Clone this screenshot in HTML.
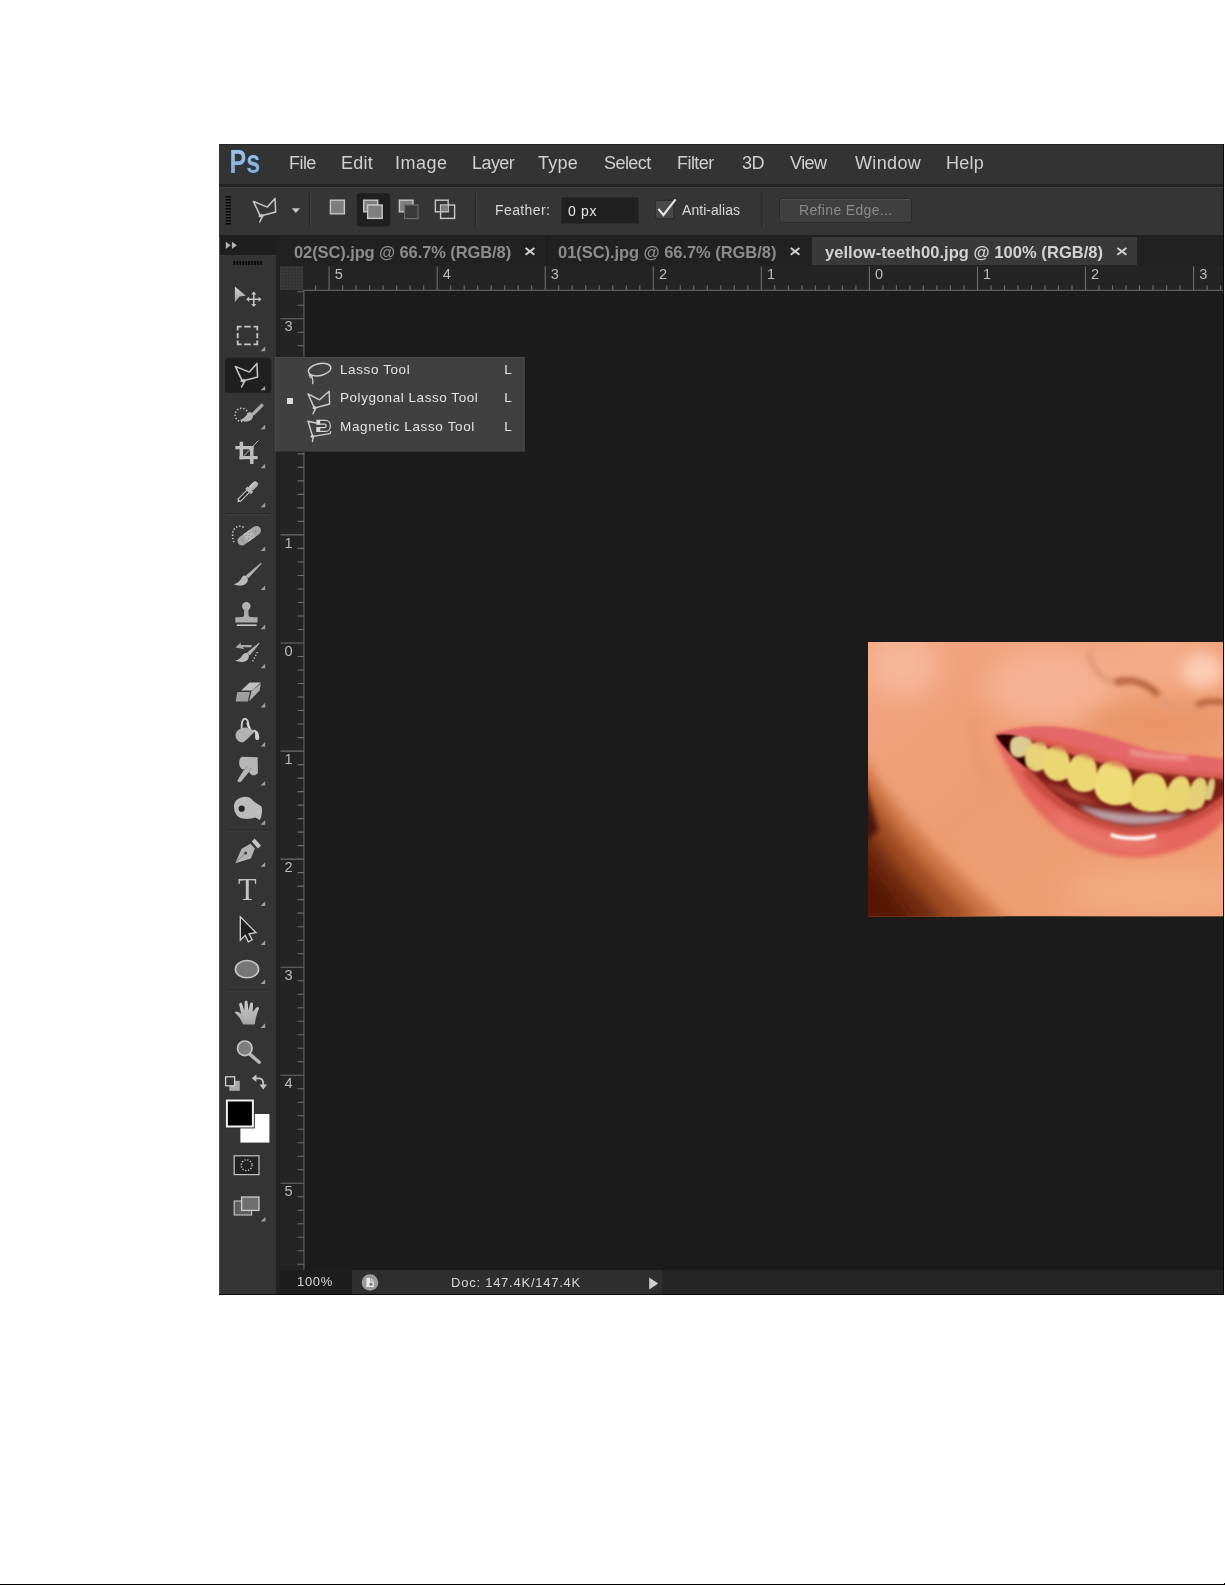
<!DOCTYPE html>
<html>
<head>
<meta charset="utf-8">
<title>Polygonal Lasso Tool</title>
<style>
*{margin:0;padding:0;box-sizing:border-box;}
html,body{width:1225px;height:1585px;background:#fff;overflow:hidden;}
body{position:relative;font-family:"Liberation Sans",sans-serif;color:#d6d6d6;}
.abs{position:absolute;}
#app{position:absolute;left:219px;top:144px;width:1005px;height:1151px;background:#1b1b1b;overflow:hidden;}
#blur{position:absolute;left:0;top:0;width:1005px;height:1151px;}
#app span{filter:blur(0.3px);}
#overlay,#rul{filter:blur(0.3px);}
#menubar{left:0;top:0;width:1005px;height:40px;background:#333;}
#menubar span{position:absolute;top:9px;font-size:18px;line-height:20px;color:#d0d0d0;letter-spacing:-0.55px;white-space:nowrap;}
#menuline{left:0;top:40px;width:1005px;height:3px;background:#232323;}
#optbar{left:0;top:43px;width:1005px;height:48.4px;background:#353535;border-top:1px solid #424242;}
#optline{left:0;top:91.4px;width:1005px;height:1.8px;background:#202020;}
.lbl{position:absolute;font-size:14px;line-height:16px;color:#d8d8d8;white-space:nowrap;letter-spacing:-0.3px;}
#tabbar{left:56px;top:93px;width:949px;height:29px;background:#212121;}
.tab{position:absolute;top:0;height:28px;font-size:16.5px;line-height:31px;font-weight:bold;color:#8c8c8c;white-space:nowrap;}
.tab.act{background:#393939;color:#d2d2d2;}
.tx{position:absolute;top:0;font-size:14px;font-weight:bold;line-height:28px;color:#c4c4c4;}
#toolbar{left:0;top:93px;width:57px;height:1058px;background:#343434;}
#tbhead{left:0;top:0;width:57px;height:18px;background:#1f1f1f;}
#gap{left:57px;top:93px;width:4px;height:1058px;background:#212121;}
#canvas{left:85px;top:147px;width:920px;height:980px;background:#1b1b1b;}
#status{left:61px;top:1126px;width:944px;height:25px;background:#252525;}
#overlay{position:absolute;left:0;top:0;}
#flyout{left:56px;top:213px;width:250px;height:95px;background:#404040;border-top:1px solid #4a4a4a;border-left:1px solid #484848;border-bottom:1px solid #333;}
.fl{position:absolute;font-size:13.5px;line-height:14px;color:#e2e2e2;white-space:nowrap;}
.st{position:absolute;font-size:13px;line-height:14px;color:#d8d8d8;white-space:nowrap;}
#bottomline{left:0;top:1584px;width:1225px;height:1px;background:#000;}
#dot{left:1224px;top:1583px;width:1px;height:2px;background:#000;}
#edgeR{left:1004px;top:0;width:1px;height:1151px;background:#0a0a0a;}
#edgeT{left:0;top:0;width:1005px;height:1px;background:#262626;}
#edgeB{left:0;top:1150px;width:1005px;height:1px;background:#0a0a0a;}
</style>
</head>
<body>
<div id="app"><div id="blur">
  <div id="menubar" class="abs">
    <span id="m1" style="left:70px">File</span>
    <span id="m2" style="left:122px;letter-spacing:0.25px">Edit</span>
    <span id="m3" style="left:176px;letter-spacing:0.50px">Image</span>
    <span id="m4" style="left:253px">Layer</span>
    <span id="m5" style="left:319px;letter-spacing:0.25px">Type</span>
    <span id="m6" style="left:385px">Select</span>
    <span id="m7" style="left:458px">Filter</span>
    <span id="m8" style="left:523px">3D</span>
    <span id="m9" style="left:571px">View</span>
    <span id="m10" style="left:636px;letter-spacing:0.35px">Window</span>
    <span id="m11" style="left:727px;letter-spacing:0.25px">Help</span>
  </div>
  <div id="menuline" class="abs"></div>
  <div id="optbar" class="abs">
    <span id="o1" class="lbl" style="left:276px;top:14px;letter-spacing:0.4px">Feather:</span>
    <div class="abs" style="left:342px;top:9px;width:78px;height:27px;background:#202020;border:1px solid #2a2a2a;"></div>
    <span id="o2" class="lbl" style="left:349px;top:15px;color:#e4e4e4;letter-spacing:0.7px">0 px</span>
    <span id="o3" class="lbl" style="left:463px;top:14px;letter-spacing:0.05px">Anti-alias</span>
    <div class="abs" style="left:560px;top:9.5px;width:132.5px;height:25.5px;background:#3f3f3f;border:1px solid #2b2b2b;border-radius:3px;box-shadow:inset 0 1px 0 #4e4e4e;"></div>
    <span id="o4" class="lbl" style="left:580px;top:14px;color:#8a8a8a;letter-spacing:0.34px">Refine Edge...</span>
  </div>
  <div id="optline" class="abs"></div>
  <div id="tabbar" class="abs">
    <div class="tab" style="left:0;width:272px;"><span id="t1" class="abs" style="left:19px;letter-spacing:-0.1px">02(SC).jpg @ 66.7% (RGB/8)</span></div>
    <div class="tab" style="left:272px;width:265px;border-left:1px solid #1a1a1a"><span id="t2" class="abs" style="left:10px;letter-spacing:-0.05px">01(SC).jpg @ 66.7% (RGB/8)</span></div>
    <div class="tab act" style="left:537px;width:325px;"><span id="t3" class="abs" style="left:13px;letter-spacing:0.05px">yellow-teeth00.jpg @ 100% (RGB/8)</span></div>
  </div>
  <div id="canvas" class="abs"></div>
<svg class="abs" style="left:649px;top:498.3px" width="356" height="274.4" viewBox="0 0 1225 946" preserveAspectRatio="none">
<defs>
<filter id="b4" filterUnits="userSpaceOnUse" x="-300" y="-300" width="1900" height="1600"><feGaussianBlur stdDeviation="4"/></filter>
<filter id="b8" filterUnits="userSpaceOnUse" x="-300" y="-300" width="1900" height="1600"><feGaussianBlur stdDeviation="9"/></filter>
<filter id="b20" filterUnits="userSpaceOnUse" x="-300" y="-300" width="1900" height="1600"><feGaussianBlur stdDeviation="22"/></filter>
<filter id="b40" filterUnits="userSpaceOnUse" x="-300" y="-300" width="1900" height="1600"><feGaussianBlur stdDeviation="45"/></filter>
<linearGradient id="skin" x1="0" y1="0" x2="1" y2="1"><stop offset="0" stop-color="#f2a683"/><stop offset=".45" stop-color="#ee9c72"/><stop offset="1" stop-color="#f0a073"/></linearGradient>
<clipPath id="pc"><rect x="0" y="0" width="1225" height="946"/></clipPath>
</defs>
<g clip-path="url(#pc)">
<rect x="0" y="0" width="1225" height="946" fill="url(#skin)"/>
<!-- light cheek / nose areas -->
<ellipse cx="640" cy="150" rx="240" ry="140" fill="#f5b292" filter="url(#b40)"/>
<ellipse cx="1010" cy="70" rx="230" ry="110" fill="#f4ac88" filter="url(#b40)"/>
<ellipse cx="1150" cy="100" rx="70" ry="60" fill="#fcccb4" filter="url(#b20)"/>
<ellipse cx="1000" cy="290" rx="260" ry="70" fill="#ea9468" filter="url(#b40)"/>
<ellipse cx="120" cy="80" rx="120" ry="110" fill="#f6b899" filter="url(#b40)"/>
<ellipse cx="1000" cy="860" rx="330" ry="90" fill="#f3aa80" filter="url(#b40)"/>
<!-- neck / jaw shadow -->
<path d="M-80,300 C0,430 70,540 170,650 C260,750 360,850 490,965 L-80,965Z" fill="#cc7444" filter="url(#b20)"/>
<path d="M-80,400 C0,515 60,615 145,715 C225,808 305,890 390,965 L-80,965Z" fill="#a04c22" filter="url(#b20)"/>
<path d="M-80,520 C-10,625 50,722 120,802 C180,872 232,922 275,975 L-80,975Z" fill="#6e2c10" filter="url(#b20)"/>
<path d="M-80,640 C-20,730 30,810 90,880 L160,975 L-80,975Z" fill="#561806" filter="url(#b20)"/>
<path d="M-50,385 C-15,460 8,560 36,650 L-50,720Z" fill="#4a1408" filter="url(#b8)"/>
<!-- smile fold -->
<path d="M372,250 C350,330 370,420 430,500" fill="none" stroke="#e6966a" stroke-width="18" filter="url(#b20)"/>
<!-- nose shadows -->
<path d="M760,30 C770,110 830,150 890,140" fill="none" stroke="#e09a78" stroke-width="18" filter="url(#b8)"/>
<path d="M850,140 C900,122 960,138 1000,185" fill="none" stroke="#b4623e" stroke-width="22" filter="url(#b8)"/>
<path d="M1000,190 C1040,240 1100,240 1140,215" fill="none" stroke="#e29a78" stroke-width="16" filter="url(#b8)"/>
<path d="M1130,218 C1165,200 1200,202 1260,212" fill="none" stroke="#b4623e" stroke-width="20" filter="url(#b8)"/>
<!-- mouth: outer lips -->
<path d="M432,322 C520,290 600,285 700,300 C800,315 880,350 960,372 C1050,392 1140,388 1240,408 L1240,600 C1180,680 1080,730 950,742 C820,750 700,700 600,600 C540,540 480,440 432,322Z" fill="#e5665c" filter="url(#b8)"/>
<!-- mouth interior -->
<path d="M445,325 C520,318 600,345 700,385 C800,420 950,450 1225,470 L1225,530 C1150,600 1050,640 900,640 C780,630 680,570 600,490 C540,430 490,380 445,325Z" fill="#7a1e14" filter="url(#b4)"/>
<path d="M440,322 C470,312 500,318 520,330 L560,440 C520,420 470,370 440,322Z" fill="#2e0603" filter="url(#b4)"/>
<!-- tongue / lower teeth -->
<path d="M720,560 C810,585 950,605 1100,590 C1070,622 980,636 885,630 C810,624 760,600 720,560Z" fill="#b9a0a6" filter="url(#b8)"/>
<path d="M600,480 C660,500 740,520 800,560 C740,560 660,540 600,480Z" fill="#a84030" filter="url(#b8)"/>
<!-- teeth -->
<g filter="url(#b4)">
<path d="M490,345 C495,318 540,318 565,340 C565,380 540,402 510,398 C490,392 485,370 490,345Z" fill="#dccb92"/>
<path d="M540,400 C540,360 570,335 605,345 C625,360 625,400 600,440 C575,455 540,445 540,400Z" fill="#e6d37a"/>
<path d="M600,430 C600,385 620,352 660,358 C695,370 700,420 690,465 C665,490 615,485 600,430Z" fill="#e9d672"/>
<path d="M685,470 C685,420 705,378 750,385 C790,395 795,450 780,505 C750,528 695,520 685,470Z" fill="#ebd873"/>
<path d="M780,510 C780,450 800,405 850,410 C905,420 920,480 905,550 C870,575 790,565 780,510Z" fill="#eedc78"/>
<path d="M900,545 C905,490 930,448 980,450 C1030,455 1040,520 1025,575 C990,595 910,590 900,545Z" fill="#ead66e"/>
<path d="M1020,570 C1020,520 1040,462 1080,460 C1115,465 1115,530 1100,575 C1075,595 1030,592 1020,570Z" fill="#e8d470"/>
<path d="M1095,565 C1100,520 1115,468 1145,465 C1175,470 1170,530 1150,570 C1130,585 1100,582 1095,565Z" fill="#e4d076"/>
<path d="M1160,545 C1165,510 1170,470 1185,466 C1200,470 1195,510 1180,545Z" fill="#dcc880"/>
</g>
<!-- upper lip over teeth top -->
<path d="M440,318 C520,292 600,288 700,302 C800,318 880,352 960,374 C1050,394 1140,390 1240,410 L1240,470 C1140,450 1020,448 940,430 C860,400 780,370 700,350 C620,330 540,310 440,318Z" fill="#e4686a" filter="url(#b4)"/>
<path d="M560,335 C700,370 860,425 960,440 C1060,455 1140,455 1230,465" fill="none" stroke="#cf5548" stroke-width="14" filter="url(#b8)"/>
<path d="M900,378 C960,392 1040,400 1100,398" fill="none" stroke="#f2a79a" stroke-width="14" filter="url(#b8)"/>
<!-- lower lip inner shade -->
<path d="M540,440 C620,540 720,620 900,650 C1040,650 1140,610 1225,540" fill="none" stroke="#c4483c" stroke-width="26" filter="url(#b8)"/>
<!-- lower lip highlight -->
<path d="M640,600 C740,680 860,710 1000,690" fill="none" stroke="#ee8476" stroke-width="30" filter="url(#b20)"/>
<path d="M835,665 C880,680 940,682 990,668" fill="none" stroke="#fff4f0" stroke-width="13" filter="url(#b4)"/>
</g>
</svg>
<svg id="rul" class="abs" style="left:0;top:0" width="1005" height="1151" viewBox="219 144 1005 1151">
<rect x="280" y="266" width="945" height="25" fill="#242424"/>
<rect x="280" y="291" width="24.5" height="980" fill="#242424"/>
<rect x="280" y="266.5" width="23" height="23.5" fill="#3c3c3c"/>
<path d="M280,269.5H303 M280,272.5H303 M280,275.5H303 M280,278.5H303 M280,281.5H303 M280,284.5H303 M280,287.5H303 M283,266.5V290 M286,266.5V290 M289,266.5V290 M292,266.5V290 M295,266.5V290 M298,266.5V290 M301,266.5V290" stroke="#323232" stroke-width="1.2"/>
<path d="M303,290.3 H1225" stroke="#5c5c5c" stroke-width="1.2"/>
<path d="M303.9,290 V1271" stroke="#5c5c5c" stroke-width="1.2"/>
<path d="M315.6,285.2V290 M342.6,285.2V290 M356.1,285.2V290 M369.6,285.2V290 M383.1,285.2V290 M396.6,285.2V290 M410.1,285.2V290 M423.7,285.2V290 M450.7,285.2V290 M464.2,285.2V290 M477.7,285.2V290 M491.2,285.2V290 M504.7,285.2V290 M518.2,285.2V290 M531.7,285.2V290 M558.7,285.2V290 M572.2,285.2V290 M585.7,285.2V290 M599.2,285.2V290 M612.8,285.2V290 M626.3,285.2V290 M639.8,285.2V290 M666.8,285.2V290 M680.3,285.2V290 M693.8,285.2V290 M707.3,285.2V290 M720.8,285.2V290 M734.3,285.2V290 M747.8,285.2V290 M774.8,285.2V290 M788.4,285.2V290 M801.9,285.2V290 M815.4,285.2V290 M828.9,285.2V290 M842.4,285.2V290 M855.9,285.2V290 M882.9,285.2V290 M896.4,285.2V290 M909.9,285.2V290 M923.4,285.2V290 M936.9,285.2V290 M950.4,285.2V290 M964.0,285.2V290 M991.0,285.2V290 M1004.5,285.2V290 M1018.0,285.2V290 M1031.5,285.2V290 M1045.0,285.2V290 M1058.5,285.2V290 M1072.0,285.2V290 M1099.0,285.2V290 M1112.5,285.2V290 M1126.0,285.2V290 M1139.5,285.2V290 M1153.1,285.2V290 M1166.6,285.2V290 M1180.1,285.2V290 M1207.1,285.2V290 M1220.6,285.2V290 M297.4,291.8H304 M297.4,305.3H304 M297.4,332.3H304 M297.4,345.8H304 M297.4,359.3H304 M297.4,372.9H304 M297.4,386.4H304 M297.4,399.9H304 M297.4,413.4H304 M297.4,440.4H304 M297.4,453.9H304 M297.4,467.4H304 M297.4,480.9H304 M297.4,494.4H304 M297.4,507.9H304 M297.4,521.4H304 M297.4,548.4H304 M297.4,562.0H304 M297.4,575.5H304 M297.4,589.0H304 M297.4,602.5H304 M297.4,616.0H304 M297.4,629.5H304 M297.4,656.5H304 M297.4,670.0H304 M297.4,683.5H304 M297.4,697.0H304 M297.4,710.5H304 M297.4,724.0H304 M297.4,737.6H304 M297.4,764.6H304 M297.4,778.1H304 M297.4,791.6H304 M297.4,805.1H304 M297.4,818.6H304 M297.4,832.1H304 M297.4,845.6H304 M297.4,872.6H304 M297.4,886.1H304 M297.4,899.6H304 M297.4,913.1H304 M297.4,926.7H304 M297.4,940.2H304 M297.4,953.7H304 M297.4,980.7H304 M297.4,994.2H304 M297.4,1007.7H304 M297.4,1021.2H304 M297.4,1034.7H304 M297.4,1048.2H304 M297.4,1061.7H304 M297.4,1088.7H304 M297.4,1102.3H304 M297.4,1115.8H304 M297.4,1129.3H304 M297.4,1142.8H304 M297.4,1156.3H304 M297.4,1169.8H304 M297.4,1196.8H304 M297.4,1210.3H304 M297.4,1223.8H304 M297.4,1237.3H304 M297.4,1250.8H304 M297.4,1264.3H304" stroke="#6c6c6c" stroke-width="1.1"/>
<path d="M329.1,266.6V290 M437.2,266.6V290 M545.2,266.6V290 M653.3,266.6V290 M761.3,266.6V290 M869.4,266.6V290 M977.5,266.6V290 M1085.5,266.6V290 M1193.6,266.6V290 M280.4,318.8H304 M280.4,426.9H304 M280.4,534.9H304 M280.4,643.0H304 M280.4,751.1H304 M280.4,859.1H304 M280.4,967.2H304 M280.4,1075.2H304 M280.4,1183.3H304" stroke="#6c6c6c" stroke-width="1.1"/>
<g font-family="Liberation Sans" font-size="14.6" fill="#bcbcbc"><text x="334.7" y="279.2">5</text><text x="442.8" y="279.2">4</text><text x="550.8" y="279.2">3</text><text x="658.9" y="279.2">2</text><text x="766.9" y="279.2">1</text><text x="875.0" y="279.2">0</text><text x="983.1" y="279.2">1</text><text x="1091.1" y="279.2">2</text><text x="1199.2" y="279.2">3</text><text x="284.4" y="331.4">3</text><text x="284.4" y="439.5">2</text><text x="284.4" y="547.5">1</text><text x="284.4" y="655.6">0</text><text x="284.4" y="763.7">1</text><text x="284.4" y="871.7">2</text><text x="284.4" y="979.8">3</text><text x="284.4" y="1087.8">4</text><text x="284.4" y="1195.9">5</text></g>
</svg>

  <div id="status" class="abs">
    <div class="abs" style="left:0;top:0;width:72px;height:25px;background:#1d1d1d"></div>
    <div class="abs" style="left:72px;top:0;width:310px;height:25px;background:#2e2e2e"></div>
    <span id="s1" class="st" style="left:17px;top:5px;letter-spacing:0.7px">100%</span>
    <span id="s2" class="st" style="left:171px;top:6px;letter-spacing:0.76px">Doc: 147.4K/147.4K</span>
  </div>
  <div id="toolbar" class="abs">
    <div id="tbhead" class="abs"></div>
  </div>
  <div id="gap" class="abs"></div>
  <div id="flyout" class="abs">
    <span id="f1" class="fl" style="left:64px;top:4.5px;letter-spacing:0.6px">Lasso Tool</span>
    <span id="f2" class="fl" style="left:64px;top:33.2px;letter-spacing:0.55px">Polygonal Lasso Tool</span>
    <span id="f3" class="fl" style="left:64px;top:61.6px;letter-spacing:0.64px">Magnetic Lasso Tool</span>
    <span class="fl" style="left:228.3px;top:4.5px">L</span>
    <span class="fl" style="left:228.3px;top:33.2px">L</span>
    <span class="fl" style="left:228.3px;top:61.6px">L</span>
    <div class="abs" style="left:11px;top:40px;width:6px;height:6px;background:#dcdcdc"></div>
  </div>
  <svg id="overlay" width="1005" height="1151" viewBox="219 144 1005 1151">
<defs>
  <linearGradient id="gI" x1="0" y1="0" x2="0" y2="1"><stop offset="0" stop-color="#d0d0d0"/><stop offset="1" stop-color="#a2a2a2"/></linearGradient>
</defs>
<!-- left edge highlight -->
<rect x="219" y="237" width="1" height="1058" fill="#4a4a4a"/>
<!-- toolbar header arrows -->
<path d="M225.8,241.7 L230.6,245.3 L225.8,248.9Z M231.9,241.7 L236.9,245.3 L231.9,248.9Z" fill="#b4b4b4"/>
<!-- gripper -->
<path d="M233.4,263 H263.2" stroke="#050505" stroke-width="4" stroke-dasharray="1.6 1.38"/>
<!-- separators -->
<g stroke="#262626" stroke-width="1.2"><path d="M226,513.5H270 M226,830H270 M226,990H270"/></g>
<g stroke="#3e3e3e" stroke-width="1"><path d="M226,514.7H270 M226,831.2H270 M226,991.2H270"/></g>
<rect x="225" y="357.7" width="46.3" height="35" rx="3.5" fill="#1f1f1f"/>
<!-- flyout corner triangles -->
<g fill="#a0a0a0" id="tris">
<path d="M265.2,346.6 v4.6 h-4.6z"/><path d="M265.2,385.7 v4.6 h-4.6z"/><path d="M265.2,424.7 v4.6 h-4.6z"/><path d="M265.2,463.7 v4.6 h-4.6z"/><path d="M265.2,502.7 v4.6 h-4.6z"/><path d="M265.2,546.4 v4.6 h-4.6z"/><path d="M265.2,585.5 v4.6 h-4.6z"/><path d="M265.2,624.6 v4.6 h-4.6z"/><path d="M265.2,663.7 v4.6 h-4.6z"/><path d="M265.2,702.8 v4.6 h-4.6z"/><path d="M265.2,741.9 v4.6 h-4.6z"/><path d="M265.2,781.0 v4.6 h-4.6z"/><path d="M265.2,820.1 v4.6 h-4.6z"/><path d="M265.2,862.2 v4.6 h-4.6z"/><path d="M265.2,901.3 v4.6 h-4.6z"/><path d="M265.2,940.4 v4.6 h-4.6z"/><path d="M265.2,979.5 v4.6 h-4.6z"/><path d="M265.2,1023.3 v4.6 h-4.6z"/><path d="M265.4,1217 v4.6 h-4.6z"/>
</g>
<!-- 1 move -->
<path d="M234.9,286.6 L245.8,295.8 L239.6,296.6 L234.9,302.2Z" fill="url(#gI)"/>
<g stroke="#c4c4c4" stroke-width="1.5" fill="none"><path d="M247.6,299.3H260 M253.8,293.1V305.5"/></g>
<path d="M253.8,291.6 l2.6,3 h-5.2z M253.8,307 l2.6,-3 h-5.2z M246.1,299.3 l3,-2.6 v5.2z M261.5,299.3 l-3,-2.6 v5.2z" fill="#c4c4c4"/>
<!-- 2 marquee -->
<g stroke="#c6c6c6" stroke-width="1.8" fill="none">
<path d="M237.7,330.6V326.7H241.6 M244.2,326.7H250.8 M253.4,326.7H257.3V330.6 M257.3,332.9V338.3 M257.3,340.6V344.3H253.4 M250.8,344.3H244.2 M241.6,344.3H237.7V340.6 M237.7,338.3V332.9"/>
</g>
<!-- 3 polygonal lasso (selected) -->
<g stroke="#c8c8c8" stroke-width="1.5" fill="none" stroke-linejoin="round" stroke-linecap="round">
<path d="M242.6,381.6 L235.3,366.4 L249.3,372.1 L256.9,363.4 L257.6,377 L241.2,381.2 M245,380.3 L241.6,387"/>
<circle cx="243.6" cy="380.6" r="1.4" stroke-width="1"/>
</g>
<!-- 4 quick select -->
<circle cx="241.7" cy="414.9" r="6.6" fill="none" stroke="#d0d0d0" stroke-width="1.5" stroke-dasharray="1.3 1.95"/>
<path d="M261.8,405.4 L253.6,413.6" stroke="#a8a8a8" stroke-width="3.4" stroke-linecap="round"/>
<path d="M251.2,412.6 C254.5,414.5 253.5,420.5 248,421.3 C244.5,421.9 241.5,421 239.6,420 C243.5,419.2 246,416.5 247.6,413.2 C248.6,412 250,411.9 251.2,412.6Z" fill="#b4b4b4"/>
<!-- 5 crop -->
<g fill="#c0c0c0">
<rect x="239.6" y="441.8" width="3.5" height="17.4"/><rect x="235.3" y="446" width="18.2" height="3.3"/>
<rect x="250.1" y="446" width="3.4" height="18"/><rect x="239.6" y="456" width="18.1" height="3.2"/>
</g>
<path d="M244,455.8 L258.4,440.6" stroke="#bcbcbc" stroke-width="1"/>
<!-- 6 eyedropper -->
<g transform="translate(237.3,502.2) rotate(-45)">
<path d="M0,0 L2.6,-1.3 V1.3Z" fill="#e0e0e0"/>
<rect x="2.6" y="-1.7" width="13" height="3.4" fill="#2a2a2a" stroke="#c8c8c8" stroke-width="1.1"/>
<rect x="15.2" y="-3.9" width="3.4" height="7.8" fill="#b8b8b8"/>
<rect x="18" y="-2.9" width="10.2" height="5.8" rx="2.9" fill="url(#gI)"/>
</g>
<!-- 7 healing brush -->
<g transform="translate(249.2,535.7) rotate(-36)">
<rect x="-13.4" y="-4.6" width="26.8" height="9.2" rx="4.6" fill="#a6a6a6"/>
<rect x="-4" y="-4.6" width="8" height="9.2" fill="#bcbcbc"/>
<g fill="#808080"><circle cx="-2" cy="-2" r=".7"/><circle cx="2" cy="-2" r=".7"/><circle cx="-2" cy="2" r=".7"/><circle cx="2" cy="2" r=".7"/><circle cx="0" cy="0" r=".7"/><circle cx="-8" cy="0" r=".7"/><circle cx="8" cy="0" r=".7"/></g>
</g>
<path d="M243.6,527.2 C238,524.5 233,528 232.6,534 C232.4,538 233.2,541.5 235,543.6" fill="none" stroke="#d0d0d0" stroke-width="1.5" stroke-dasharray="1.3 1.9"/>
<!-- 8 brush -->
<path d="M260.9,563.6 L248.6,577.2 L246.6,575.6Z" fill="#b0b0b0" stroke="#b0b0b0" stroke-width="1.2" stroke-linejoin="round"/>
<path d="M246.2,576 C249.8,578.5 247.5,585 241.5,585.6 C238.2,585.9 235.6,585 233.8,584.2 C238,583.2 240.2,580.8 241.8,577.4 C242.8,575.4 244.8,575 246.2,576Z" fill="#bababa"/>
<!-- 9 stamp -->
<circle cx="246.3" cy="606.3" r="4.2" fill="#b4b4b4"/>
<path d="M244.3,608 H248.3 L248.6,615.5 C249,617 251,617.3 257.6,617.3 V622.6 H235.3 V617.3 C242,617.3 243.6,617 244,615.5Z" fill="#ababab"/>
<rect x="236.8" y="624.4" width="19.8" height="1.6" fill="#c8c8c8"/>
<!-- 10 history brush -->
<path d="M258.9,643.4 L249.6,654.6 L247.6,653Z" fill="#b4b4b4" stroke="#b4b4b4" stroke-width="1.2" stroke-linejoin="round"/>
<path d="M247.4,653.4 C250.6,655.5 248.6,661.4 243,661.9 C239.8,662.2 237,661.5 235.2,660.6 C239.2,659.8 241.4,657.6 243,654.6 C244,652.9 246,652.6 247.4,653.4Z" fill="#bababa"/>
<path d="M235.4,647.6 L240.8,642.6 V645 H251.6 V647.2 H242.6 L244.6,649.2Z" fill="#a8a8a8"/>
<path d="M257.4,652 L252.2,662.2" stroke="#c8c8c8" stroke-width="1.4" stroke-dasharray="1.2 1.9"/>
<!-- 11 eraser -->
<path d="M241.2,690.4 L249.6,682.6 H260.8 L252.4,690.4Z" fill="#c0c0c0"/>
<path d="M237.4,692 H250 L247.8,701.6 H235.6Z" fill="#9e9e9e"/>
<path d="M251.4,691.4 L260.9,683.6 L259.6,690.6 L249.2,701.2Z" fill="#b0b0b0"/>
<!-- 12 bucket -->
<path d="M241.8,729.6 C241,723 242.6,718.8 245,718.8 C247.4,718.8 248.6,722 248.6,728" fill="none" stroke="#cccccc" stroke-width="1.9"/>
<path d="M247.4,723.4 L250.2,729.6" stroke="#d8d8d8" stroke-width="2.2" stroke-linecap="round"/>
<path d="M235.6,734 C236.6,730.5 241,727.5 246,727.6 L255.2,730.8 C251.5,735 246,740.5 243.4,742.2 C239.5,743 234.8,739.5 235.6,734Z" fill="#b2b2b2"/>
<path d="M253.2,729.6 C257,729.8 259.2,733 259.2,737.4 C259.2,740.8 255.6,741 255.2,738 C254.9,735.5 256,733 253.2,729.6Z" fill="#d0d0d0"/>
<!-- 13 smudge -->
<path d="M242.5,756.8 L257.6,757.2 L258,772.6 C256.5,775.6 252.5,776 250.6,774 C249.8,773 249.4,772.4 249,772 L241.2,781.6 C240,782.6 237.6,782.2 237.4,780.6 L244,769.6 C240.6,769.6 238.8,766 239.2,762 C239.4,759 240.6,757 242.5,756.8Z" fill="#b6b6b6"/>
<path d="M247,766.4 L244.6,770.4 M251.4,767.6 L249.4,771.6" stroke="#8e8e8e" stroke-width=".9"/>
<!-- 14 dodge -->
<path d="M233.8,806 C234.4,800 240,796.4 246.4,796.8 C250,797 252,799.6 254.6,802 L261.6,806.6 C262.4,811 262.2,815.6 259.8,820 L255.4,817.6 C250,819.4 244,819.6 239.6,817.6 C236,816 235.8,812.8 234.6,811.6Z" fill="#bcbcbc"/>
<circle cx="241.7" cy="808.7" r="3.1" fill="#262626"/>
<!-- 15 pen -->
<path d="M235.3,863.3 L241.6,848.8 L250.6,843.8 L254.9,848.4 L250.9,858.4Z" fill="#b4b4b4"/>
<path d="M235.8,862.6 L244.8,853.6" stroke="#7c7c7c" stroke-width=".9"/>
<circle cx="245.6" cy="853" r="1.5" fill="#3a3a3a"/>
<path d="M251.8,841.6 L254.6,838.4 L261,845.4 L258,848.4Z" fill="#c4c4c4"/>
<!-- 16 type -->
<text x="247.2" y="900.2" font-family="Liberation Serif" font-size="30.5" text-anchor="middle" fill="#c4c4c4">T</text>
<!-- 17 path select -->
<path d="M240.3,916.8 V940.2 L245.2,935.4 L248.3,941.8 L252.1,939.8 L249,933.8 L256,932.6Z" fill="#1e1e1e" stroke="#d2d2d2" stroke-width="1.3" stroke-linejoin="miter"/>
<!-- 18 ellipse -->
<ellipse cx="247" cy="969.2" rx="11.6" ry="8.6" fill="#767676" stroke="#c8c8c8" stroke-width="1.5"/>
<!-- 19 hand -->
<path d="M243.2,1024.6 C240.4,1018.5 237.4,1014.5 234.6,1012.4 C236.2,1010.6 239,1011.6 241.2,1014.2 L239.2,1004.6 C239,1002.4 241.6,1002 242.2,1004.2 L244.4,1011 L244.6,1002.2 C244.8,1000.4 247.4,1000.4 247.6,1002.2 L248.4,1010.8 L250.2,1003.6 C250.8,1001.8 253.2,1002.4 253,1004.2 L252.6,1012 L256.4,1007.4 C257.6,1006.2 259.6,1007.2 258.8,1009 C256.6,1014 255.4,1019 254.8,1024.6Z" fill="url(#gI)"/>
<!-- 20 zoom -->
<path d="M250,1054.4 L259.2,1062.2" stroke="#b8b8b8" stroke-width="3.4" stroke-linecap="round"/>
<circle cx="244.8" cy="1048.3" r="7.3" fill="#7e7e7e" stroke="#c4c4c4" stroke-width="1.7"/>
<!-- mini default colors + swap -->
<rect x="229.4" y="1080.8" width="10.4" height="10" fill="#a8a8a8"/>
<rect x="225.6" y="1076.8" width="9" height="9" fill="#333" stroke="#cfcfcf" stroke-width="1.3"/>
<path d="M255.6,1078.3 H258.6 C261.6,1078.3 263.2,1080.2 263.2,1083.4 V1085" fill="none" stroke="#c4c4c4" stroke-width="1.7"/>
<path d="M251.8,1078.3 L256.4,1074.6 V1082Z M263.2,1089.4 L259.4,1084.6 H267Z" fill="#c4c4c4"/>
<!-- swatches -->
<rect x="240.4" y="1114" width="29" height="28.6" fill="#fff"/>
<rect x="225" y="1098.6" width="29.8" height="29.8" fill="#2a2a2a"/>
<rect x="226.9" y="1100.5" width="26" height="26" fill="#000" stroke="#f0f0f0" stroke-width="2"/>
<!-- quick mask -->
<rect x="234.2" y="1155.8" width="24.8" height="18.8" fill="#222" stroke="#c6c6c6" stroke-width="1.2"/>
<circle cx="246.6" cy="1165.2" r="5.4" fill="none" stroke="#d8d8d8" stroke-width="1.4" stroke-dasharray="1.2 1.63"/>
<!-- screen mode -->
<rect x="234.2" y="1201" width="17.4" height="14" fill="#5e5e5e" stroke="#bdbdbd" stroke-width="1.2"/>
<rect x="241.6" y="1197" width="17.4" height="13.4" fill="#6e6e6e" stroke="#cdcdcd" stroke-width="1.3"/>

<!-- OPTIONS BAR -->
<path d="M228.3,196 V226" stroke="#0a0a0a" stroke-width="5.4" stroke-dasharray="1.5 1.5"/>
<g stroke="#cacaca" stroke-width="1.5" fill="none" stroke-linejoin="round" stroke-linecap="round">
<path d="M260.6,216.6 L253.4,201.4 L267.4,207.1 L275,198.4 L275.7,212 L259.3,216.2 M263.1,215.3 L259.7,222"/>
<circle cx="261.7" cy="215.6" r="1.4" stroke-width="1"/>
</g>
<path d="M291.8,208.3 H300 L295.9,213Z" fill="#c6c6c6"/>
<path d="M309.5,192.5 V227" stroke="#262626" stroke-width="1.2"/><path d="M310.7,192.5 V227" stroke="#424242" stroke-width="1"/>
<path d="M475.5,192.5 V227" stroke="#262626" stroke-width="1.2"/><path d="M476.7,192.5 V227" stroke="#424242" stroke-width="1"/>
<path d="M762,192.5 V227" stroke="#262626" stroke-width="1.2"/><path d="M763.2,192.5 V227" stroke="#424242" stroke-width="1"/>
<!-- new selection -->
<rect x="330.4" y="200.2" width="14" height="13.6" fill="#7e7e7e" stroke="#c8c8c8" stroke-width="1.4"/>
<!-- add (active) -->
<rect x="356.8" y="193.2" width="33.4" height="33.2" rx="3" fill="#1f1f1f"/>
<rect x="363.7" y="200.2" width="14" height="11.6" fill="#7e7e7e" stroke="#c8c8c8" stroke-width="1.4"/>
<rect x="367.6" y="205" width="14.6" height="13.4" fill="#7e7e7e" stroke="#c8c8c8" stroke-width="1.4"/>
<!-- subtract -->
<rect x="399.4" y="200.2" width="13.6" height="11.6" fill="#7e7e7e" stroke="#c8c8c8" stroke-width="1.4"/>
<rect x="404.6" y="205" width="13.4" height="13.6" fill="#3a3a3a" stroke="#6a6a6a" stroke-width="1.2"/>
<!-- intersect -->
<rect x="435.4" y="200.2" width="12.8" height="11.6" fill="none" stroke="#c8c8c8" stroke-width="1.4"/>
<rect x="440.6" y="205" width="14" height="13.4" fill="none" stroke="#c8c8c8" stroke-width="1.4"/>
<rect x="441.3" y="205.7" width="6.2" height="5.4" fill="#7e7e7e"/>
<!-- checkbox -->
<rect x="655.2" y="200.4" width="18.8" height="18.4" rx="2" fill="#484848" stroke="#2a2a2a" stroke-width="1.2"/>
<path d="M658.4,208.8 L663.4,215 L675.6,199.4" fill="none" stroke="#e6e6e6" stroke-width="2.1"/>
<!-- FLYOUT ICONS -->
<g stroke="#cfcfcf" stroke-width="1.4" fill="none" stroke-linejoin="round" stroke-linecap="round">
<ellipse cx="319.6" cy="369.6" rx="11.4" ry="6" transform="rotate(-12 319.6 369.6)"/>
<path d="M309.2,375 C312,376 313.4,379.6 312.6,383.6"/>
<circle cx="310.8" cy="376.6" r="1.3" stroke-width="1"/>
<path d="M314.6,408.6 L308,393.8 L319.6,399.8 L329.2,391.2 L329.6,404 L313.4,408.4 M316,407.6 L313,413.8"/>
<circle cx="314.6" cy="407.6" r="1.3" stroke-width="1"/>
<path d="M312.6,436.2 L308,421.2 L316,423 M330.6,431.6 L330.2,433.6 L311.4,436.6 M313.4,436.4 L312.4,441.6"/>
<circle cx="312.4" cy="436.4" r="1.3" stroke-width="1"/>
</g>
<path d="M317,420.4 H325.4 C332,420.4 332,431.4 325.4,431.4 H317 V427.6 H324.8 C326.6,427.6 326.6,424.2 324.8,424.2 H317Z" fill="#3a3a3a" stroke="#d2d2d2" stroke-width="1.2"/>
<rect x="316.6" y="420" width="3.6" height="4.6" fill="#d8d8d8"/><rect x="316.6" y="427.2" width="3.6" height="4.6" fill="#d8d8d8"/>
<!-- STATUS BAR -->
<circle cx="370" cy="1282.5" r="8.3" fill="#9c9c9c"/>
<path d="M366.4,1278 H370.6 L373.8,1281 V1287 H366.4Z" fill="#e8e8e8"/>
<path d="M370.6,1278 V1281 H373.8" fill="none" stroke="#8a8a8a" stroke-width=".8"/>
<circle cx="371" cy="1284.2" r="1.6" fill="#7a7a7a"/>
<path d="M649.2,1277.6 L658.2,1283.6 L649.2,1289.6Z" fill="#d0d0d0"/>
<!-- TABX -->
<g stroke="#d0d0d0" stroke-width="2" fill="none">
<path d="M525.6,248 L534.4,254.8 M534.4,248 L525.6,254.8"/>
<path d="M790.8,248 L799.4,254.8 M799.4,248 L790.8,254.8"/>
<path d="M1117.4,248 L1126.4,254.8 M1126.4,248 L1117.4,254.8"/>
</g>
<!-- PSLOGO -->
<defs><linearGradient id="gPs" x1="0" y1="0" x2="0" y2="1"><stop offset="0" stop-color="#abc6e4"/><stop offset="1" stop-color="#7ea5cf"/></linearGradient></defs>
<g transform="translate(229.6,173.1) scale(.77,1)">
<text x="0" y="0" font-family="Liberation Sans" font-weight="bold" font-size="32.6" fill="url(#gPs)" stroke="#1b3d66" stroke-width="2.6" stroke-opacity=".55" paint-order="stroke" stroke-linejoin="round">Ps</text>
</g>

</svg>

  <div id="edgeT" class="abs"></div><div id="edgeR" class="abs"></div><div id="edgeB" class="abs"></div>
</div></div>
<div id="bottomline" class="abs"></div><div id="dot" class="abs"></div>
</body>
</html>
